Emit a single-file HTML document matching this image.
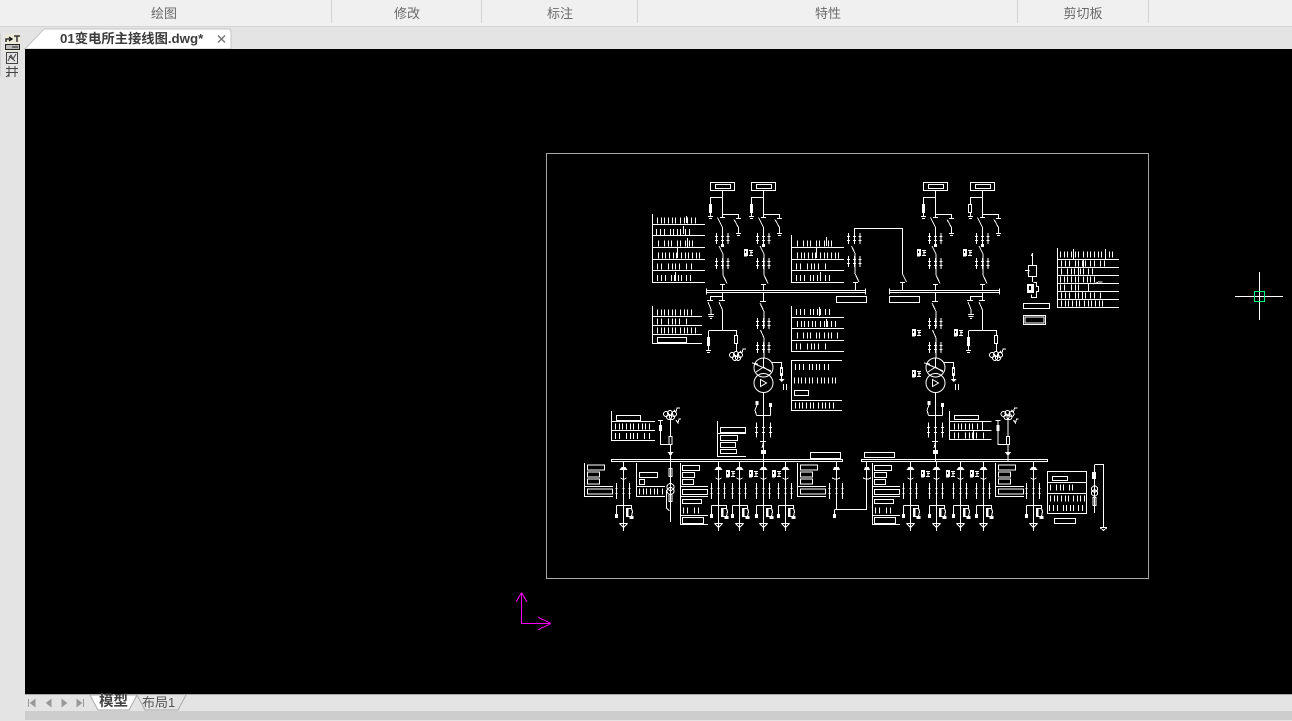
<!DOCTYPE html>
<html lang="zh"><head><meta charset="utf-8"><title>01变电所主接线图.dwg</title>
<style>
html,body{margin:0;padding:0;background:#e4e4e4}
#app{position:relative;width:1292px;height:721px;overflow:hidden;background:#e4e4e4;font-family:"Liberation Sans","Noto Sans CJK SC",sans-serif}
.abs{position:absolute}
#rib{left:0;top:0;width:1292px;height:26px;background:#f0f0f0;border-bottom:1px solid #d4d4d4}
.sep{position:absolute;top:0;width:1px;height:23px;background:#d2d2d2}
.rl{position:absolute;top:5px;font-size:13px;line-height:17px;color:#6a6a6a;transform:translateX(-50%);white-space:nowrap}
#cv{left:25px;top:49px;width:1267px;height:645px;background:#000}
#d{position:absolute;left:0;top:0}
.w{fill:none;stroke:#fff;stroke-width:1}
.f{fill:#fff;stroke:none}
.b{fill:#000;stroke:#fff;stroke-width:1}
.t{fill:none;stroke:#fff;stroke-width:6}
.p1{stroke-dasharray:1 3 1 2 1 3 1 3 1 2 1 4 1 3 1 2 1 3}
.p2{stroke-dasharray:1 3 1 3 1 5 1 2 1 3 1 2 1 4 1 3 1 5}
.p3{stroke-dasharray:1 5 1 3 1 2 1 5 1 2 1 4 1 3 1 2}
.p4{stroke-dasharray:1 3 1 6 1 3 1 2 1 3 1 6 1 4}
</style></head><body><div id="app">
<div class="abs" id="rib">
<span class="sep" style="left:331px"></span><span class="sep" style="left:481px"></span><span class="sep" style="left:637px"></span><span class="sep" style="left:1017px"></span><span class="sep" style="left:1148px"></span>
<span class="rl" style="left:164px">绘图</span><span class="rl" style="left:407px">修改</span><span class="rl" style="left:560px">标注</span><span class="rl" style="left:828px">特性</span><span class="rl" style="left:1083px">剪切板</span>
</div>
<svg class="abs" style="left:0;top:27px" width="240" height="23">
<path d="M25 22L44 2Q45 2 46 2H228Q231 2 231 5V22Z" fill="#fff" stroke="#c4c4c4"/>
<path d="M218 8.5l7 7M225 8.5l-7 7" stroke="#777" stroke-width="1.5" fill="none"/>
</svg>
<div class="abs" style="left:60px;top:30px;font-size:13.3px;font-weight:bold;line-height:17px;color:#3c3c3c;white-space:nowrap">01变电所主接线图.dwg*</div>
<div class="abs" style="left:0;top:33px;width:1px;height:43px;background:#d2d2d2"></div>
<svg class="abs" style="left:4px;top:34px" width="18" height="44">
<rect x="1" y="0" width="15" height="17" fill="#ecebd8"/>
<path d="M2 8V5H7M5 3l3 2-3 2" fill="none" stroke="#111" stroke-width="1.3"/>
<path d="M10 2h6M13 2v6" stroke="#333" stroke-width="1.5" fill="none"/>
<rect x="1.5" y="10.5" width="14" height="5" fill="#bbb" stroke="#222"/>
<path d="M8 13h6" stroke="#222"/>
<rect x="2.5" y="18.5" width="11" height="11" fill="none" stroke="#444"/>
<path d="M4 27l3-6 2 4 3-5M5 22l6 5" stroke="#444" fill="none"/>
<path d="M2 34.5h12M2 38.5h12M5 32v11M11 32v11M2 43c2-1 3-2 3-4" stroke="#444" fill="none"/>
</svg>
<div class="abs" id="cv"></div>
<svg id="d" width="1292" height="721" viewBox="0 0 1292 721" shape-rendering="crispEdges">
<defs>
<path id="tr" class="w" d="M-6 0v11M0 0v11M5.500 0v11M-7.500 3.500h3M-7.500 7.500h3M-1.500 3.500h3M-1.500 7.500h3M4 3.500h3M4 7.500h3"/>
<path id="tr2" class="w" d="M-7 0v16M0 0v16M6 0v16M-8 5.500h2M-8 10.500h2M-1 5.500h2M-1 10.500h2M5 5.500h2M5 10.500h2"/>
<g id="lab"><rect class="f" x="0" y="0" width="4" height="7"/><path class="w" d="M5 1.500h4M6 3.500h3M5 6.500h4M7 1v5M0 7h3"/><rect x="1" y="2" width="1" height="2" fill="#000"/></g>
<g id="blob"><circle class="w" cx="0" cy="0" r="2.500"/><circle class="w" cx="4" cy="-1" r="2.500"/><circle class="w" cx="8" cy="0" r="2.500"/><circle class="w" cx="3" cy="3" r="2.500"/><circle class="w" cx="6" cy="3" r="2.500"/><path class="w" d="M8-4l2 2 1-4h3"/></g>
<g id="bayTop">
<rect class="w" x="710.500" y="182.500" width="24" height="8"/><rect class="w" x="715.500" y="184.500" width="15" height="4"/>
<path class="w" d="M722.500 191V217M722.500 197.500H710.500V204M710.500 213V216M708 216.500h5M709 218.500h3M722.500 214.500H738.500V218M736 218.500h5M734 219.500l4.500 8V233M736 233.500h5M737 235.500h3M720 217.500h5M717.500 217.500l5 10V245M719 246l4 8V275l4 8.500M720 284.500h5M722.500 284.500V290"/>
<rect class="f" x="709" y="204" width="3" height="9"/><rect class="f" x="721" y="244" width="3" height="3"/>
<use href="#tr" x="722.500" y="233"/><use href="#tr" x="722.500" y="258"/>
</g>
<g id="bayLow">
<path class="w" d="M722.500 293V300M719 300.500h6M722.500 296.500H710.500V300M707 300.500h6M708 302l3 7.500V314M708 314.500h6M708.500 316.500h5M710 318.500h2M719 302l3.500 8V330M708.500 330.500H736.500V335M708.500 331V337M708.500 346V350M706 350.500h5M707 352.500h3M736.500 344V352"/>
<rect class="f" x="707" y="337" width="3" height="9"/><rect class="b" x="734.500" y="335.500" width="3" height="8"/>
<use href="#blob" x="732" y="355"/>
</g>
<g id="trans">
<path class="w" d="M763.500 293V302M760 301.500h6M760 303l4 8.500V328M760.500 330l3.500 8V358M752 363l6 1M772 362.500H781.500V367M781.500 376V381M763.500 392.500V461M756.500 415.500H770.500M756.500 415.500L755 410 757 405V401M770.500 415.500V404M760 441.500h6M763.500 442l-1.500 6"/>
<circle class="w" cx="763.500" cy="367.500" r="9.500" shape-rendering="auto"/><circle class="w" cx="763.500" cy="383" r="9.500" shape-rendering="auto"/>
<path class="w" d="M763.500 358V367L756 372M763.500 367L771 372M755 364L771 371" shape-rendering="auto"/>
<path class="w" d="M760.500 379.500V386.500L766.500 383Z" shape-rendering="auto"/>
<rect class="f" x="780" y="367" width="3" height="9"/><rect x="781" y="369" width="1" height="4" fill="#000"/><path class="f" d="M778.500 379h6l-3 3z"/>
<path class="w" d="M783.500 384v6M786.500 384v6"/>
<rect class="f" x="755.500" y="401" width="3" height="4"/><rect class="f" x="769" y="403" width="3" height="4"/>
<use href="#tr" x="763.500" y="318"/><use href="#tr" x="763.500" y="342"/>
<path class="w" d="M756.500 422.500v15M763.500 422.500v15M770.500 422.500v15M755 427.500h3M755 432.500h3M762 427.500h3M762 432.500h3M769 427.500h3M769 432.500h3"/>
<rect class="f" x="761" y="450" width="5" height="4"/>
</g>
<g id="fus">
<path class="w" d="M670.500 418V461M660.500 420V444.500H670.500M658 420.500h5M660.500 431V420"/>
<use href="#blob" x="666" y="414"/>
<path class="w" d="M676 420l2 3 1-4h2"/>
<rect class="f" x="659" y="425" width="3" height="6"/><rect class="b" x="669" y="436.500" width="3" height="8"/>
<path class="f" d="M667.500 452h6l-3 4z"/>
</g>
<g id="fd">
<path class="w" d="M0 462V531M-3 478q3 2 6 0M-4 523.500h8M-4 523.500l4 4 4-4M-7 505.500H8V508M-7 505.500V515"/>
<path class="f" d="M-2 467h4l2 3h-8z"/>
<use href="#tr2" x="0" y="483"/>
<rect class="f" x="-8.500" y="514" width="3" height="4"/>
<path class="w" d="M3 508.500h5l1 3-1 5H3z"/><rect class="f" x="3" y="509" width="2" height="7"/><rect class="f" x="6" y="516" width="4" height="3"/>
</g>
<g id="bx4">
<path class="w" d="M0.500 0V33.500H29M0.500 23.500H29"/>
<rect class="w" x="3.500" y="2" width="17" height="5"/><rect class="w" x="3.500" y="9" width="12" height="5"/><rect class="w" x="3.500" y="16" width="12" height="5"/><rect class="w" x="3.500" y="26" width="25" height="5"/>
</g>
</defs>
<!-- frame -->
<rect x="546.500" y="153.500" width="602" height="425" fill="none" stroke="#a6a6a6"/>
<!-- upper bays -->
<use href="#bayTop"/><use href="#bayTop" x="41"/><use href="#bayTop" x="213"/><use href="#bayTop" x="260"/>
<rect class="b" x="968.500" y="204.500" width="3" height="8"/>
<use href="#lab" x="744" y="249"/><use href="#lab" x="917" y="249"/><use href="#lab" x="963" y="249"/>
<!-- tie -->
<path class="w" d="M854.500 244V228.500H902.500V274l4 8M900 282.500h5M902.500 282.500V290M851.500 246l3.500 7.500V273.500l4 8.500M853 282.500h5M855.500 282.500V290"/>
<use href="#tr" x="854.500" y="233"/><use href="#tr" x="854.500" y="256"/>
<!-- HV bus -->
<path class="w" d="M706 290.500H866M706 292.500H866M706.500 288.500v6M865.500 288.500v6M889 290.500H999.500M889 292.500H999.500M889.500 288.500v6M999.500 288.500v6"/>
<rect class="w" x="836.500" y="296.500" width="30" height="6"/><rect class="w" x="889.500" y="296.500" width="30" height="6"/>
<use href="#bayLow"/><use href="#bayLow" x="260"/><use href="#trans"/><use href="#trans" x="172"/>
<use href="#lab" x="912" y="329"/><use href="#lab" x="954" y="329"/><use href="#lab" x="912" y="370"/>
<!-- table T1 -->
<path class="w" d="M652.500 214V282.500H705M652.500 224.500H705M652.500 235.500H705M652.500 247.500H705M652.500 259.500H705M652.500 270.500H705"/>
<path class="t p1" d="M657 220.500H697"/><path class="t p2" d="M656 232H694"/><path class="t p3" d="M658 243.500H698"/><path class="t p1" d="M658 255.500H700"/><path class="t p4" d="M657 266.500H692"/><path class="t p2" d="M657 278H692"/>
<path class="w" d="M686.500 216v7M683.500 226v8M687.500 238v9M677.500 248v10M675.500 272v9"/>
<!-- T2 -->
<path class="w" d="M791.500 235V282.500H844M791.500 247.500H844M791.500 259.500H844M791.500 270.500H844"/>
<path class="t p3" d="M797 243.500H836"/><path class="t p1" d="M797 255.500H839"/><path class="t p4" d="M796 266.500H830"/><path class="t p2" d="M796 278H831"/>
<path class="w" d="M826.500 237v9M816.500 248v10M820.500 272v9"/>
<!-- T3 -->
<path class="w" d="M652.500 306V343.500H702M652.500 316.500H702M652.500 325.500H702M652.500 334.500H702"/>
<path class="t p1" d="M657 312.500H694"/><path class="t p4" d="M657 321.500H688"/><path class="t p1" d="M657 330.500H696"/>
<rect class="w" x="657.500" y="337.500" width="29" height="5"/>
<!-- T4 -->
<path class="w" d="M791.500 306V351.500H844M791.500 317.500H844M791.500 328.500H844M791.500 340.500H844"/>
<path class="t p2" d="M796 312H830"/><path class="t p1" d="M797 324H836"/><path class="t p3" d="M797 335.500H839"/><path class="t p4" d="M796 346.500H830"/>
<path class="w" d="M819.500 307v9M826.500 319v8"/>
<!-- T5 -->
<path class="w" d="M791.500 360V410.500H842M791.500 360.500H842M791.500 400.500H842"/>
<path class="t p2" d="M795 367H829"/><path class="t p1" d="M794 380.500H839"/><rect class="w" x="794.500" y="390.500" width="14" height="5"/><path class="t p1" d="M795 405.500H834"/>
<!-- T6 -->
<path class="w" d="M717.500 421V456.500H746M717.500 433.500H746"/>
<rect class="w" x="720.500" y="427.500" width="25" height="5"/><rect class="w" x="720.500" y="435.500" width="17" height="5"/><rect class="w" x="720.500" y="442.500" width="15" height="5"/><rect class="w" x="720.500" y="449.500" width="16" height="4"/>
<!-- T7 T8 -->
<path class="w" d="M611.500 411V440.500H655M611.500 421.500H655M611.500 430.500H655"/>
<rect class="w" x="616.500" y="415.500" width="24" height="5"/><path class="t p1" d="M615 426.500H653"/><path class="t p4" d="M615 436H650"/>
<path class="w" d="M949.500 411V439.500H991.500M949.500 421.500H991.500M949.500 430.500H991.500M982.500 421v9M973.500 431v8"/>
<rect class="w" x="954.500" y="415.500" width="24" height="4"/><path class="t p1" d="M954 426.500H980"/><path class="t p4" d="M954 435.500H985"/>
<!-- T9 -->
<path class="w" d="M1057.500 248V307.500H1119M1057.500 259.500H1119M1057.500 267.500H1119M1057.500 275.500H1119M1057.500 283.500H1119M1057.500 291.500H1119M1057.500 299.500H1119"/>
<path class="t p1" d="M1060 254.500H1115"/><path class="t p2" d="M1061 263.500H1107"/><path class="t p3" d="M1061 271.500H1094"/><path class="t p1" d="M1060 279.500H1096"/><path class="t p4" d="M1060 287.500H1082"/><path class="t p2" d="M1061 295.500H1103"/><path class="t p1" d="M1061 303.500H1106"/>
<path class="w" d="M1073.500 249v10M1105.500 249v10M1083.500 260v7M1078.500 268v7M1088.500 284v7M1082.500 292v8M1093.500 284l5-2h4"/>
<path class="w" d="M1032.500 256V265M1028.500 265.500h8v11h-8zM1025 270.500h4l-1 3M1032.500 277V282M1033.500 282.500h3v4h2v5h-2v6h-5v-3"/>
<rect class="f" x="1027" y="284" width="7" height="9"/><rect x="1029" y="286" width="2" height="4" fill="#000"/><path class="f" d="M1031 256h2v-3h-1z"/>
<rect class="w" x="1023.500" y="303.500" width="26" height="5"/>
<rect class="w" x="1023.500" y="315.500" width="22" height="9"/><rect class="w" x="1025" y="317" width="19" height="6"/>
<!-- LV bus -->
<rect class="w" x="611.500" y="459.500" width="231" height="2"/><rect class="w" x="861.500" y="459.500" width="186" height="2"/>
<rect class="w" x="810.500" y="452.500" width="30" height="6"/><rect class="w" x="864.500" y="452.500" width="30" height="5"/>
<use href="#fus"/><use href="#fus" x="337.500"/>
<!-- LV side tables -->
<use href="#bx4" x="584" y="463"/><use href="#bx4" x="797" y="463"/><use href="#bx4" x="995" y="463"/>
<path class="w" d="M636.500 463V496.500H665M636.500 486.500H665"/><rect class="w" x="639.500" y="472.500" width="18" height="5"/><rect class="w" x="639.500" y="479.500" width="5" height="5"/><path class="t p1" d="M639 491.500H664"/>
<g id="b3"><path class="w" d="M680.500 463V524.500H708M680.500 486.500H708M680.500 496.500H708M680.500 515.500H708"/>
<rect class="w" x="682.500" y="465.500" width="17" height="5"/><rect class="w" x="682.500" y="472.500" width="12" height="5"/><rect class="w" x="682.500" y="479.500" width="11" height="5"/><rect class="w" x="682.500" y="489.500" width="25" height="5"/><rect class="w" x="682.500" y="499.500" width="19" height="4"/><rect class="w" x="682.500" y="517.500" width="21" height="6"/><path class="t p4" d="M683 510.500H700"/></g>
<use href="#b3" x="192"/>
<!-- LV feeders -->
<use href="#fd" x="623.500"/><use href="#fd" x="718.500"/><use href="#fd" x="739.500"/><use href="#fd" x="763.500"/><use href="#fd" x="785.500"/>
<use href="#fd" x="910.500"/><use href="#fd" x="936.500"/><use href="#fd" x="960.500"/><use href="#fd" x="983.500"/><use href="#fd" x="1033.500"/>
<use href="#lab" x="726" y="470"/><use href="#lab" x="749" y="470"/><use href="#lab" x="772" y="470"/>
<use href="#lab" x="921" y="470"/><use href="#lab" x="946" y="470"/><use href="#lab" x="970" y="470"/>
<!-- centre feeders -->
<path class="w" d="M670.500 461V522M666.500 490V508l3 3M836.500 461V509.500M834.500 509.500H866.500V462M834.500 510V515"/>
<rect class="w" x="669" y="468.500" width="3" height="8"/><circle class="w" cx="670.500" cy="487" r="3.500"/><circle class="w" cx="670.500" cy="491" r="3.500"/><rect class="w" x="669" y="494.500" width="3" height="7"/>
<path class="f" d="M834 467h5l1 3h-7zM865 467h4l1 3h-6z"/><path class="w" d="M832 478q4 2 8 0M863 478q4 2 8 0"/>
<rect class="f" x="833" y="514" width="3" height="4"/>
<use href="#tr2" x="836.500" y="483"/>
<!-- C3 -->
<rect class="w" x="1047.500" y="471.500" width="39" height="42"/><path class="w" d="M1047.500 482.500h39M1047.500 493.500h39"/>
<rect class="w" x="1052.500" y="476.500" width="15" height="4"/><path class="t p3" d="M1050 487.500H1074"/><path class="t p1" d="M1050 498.500H1085"/><path class="t p2" d="M1049 508H1085"/>
<rect class="w" x="1054.500" y="518.500" width="21" height="5"/>
<path class="w" d="M1094.500 464.500H1103.500V527M1100 527.500h7M1100 527.500l3.500 3 3.500-3M1094.500 465V513"/>
<rect class="f" x="1092" y="472" width="4" height="7"/><circle class="w" cx="1094.500" cy="489" r="3"/><circle class="w" cx="1094.500" cy="493" r="3"/><rect class="w" x="1093" y="497.500" width="3" height="8"/>
<!-- crosshair -->
<path d="M1235 296.500H1283M1259.500 272V320" stroke="#fff" fill="none"/>
<rect x="1254.500" y="291.500" width="10" height="10" fill="none" stroke="#00ff7f"/>
<!-- UCS -->
<path d="M521.500 593V623.500H551M518 598l3.500-5 3.500 5M516 602l3-5M527 602l-3-5M551 623.500l-8-4M551 623.500l-8 4M543 620l-5-3M543 627l-5 3" fill="none" stroke="#f0f" stroke-width="1"/>
</svg>
<!-- bottom -->
<div class="abs" style="left:25px;top:694px;width:1267px;height:1px;background:#a8a8a8"></div>
<div class="abs" style="left:25px;top:711px;width:1267px;height:9px;background:#cdcdcd"></div>
<svg class="abs" style="left:25px;top:695px" width="170" height="17">
<path d="M65 0L73 15H104L112 0Z" fill="#fff" stroke="#aaa"/>
<path d="M112 0L120 15H153L161 0" fill="none" stroke="#aaa"/>
<path d="M3.500 4v8M10 4.500L5.500 8 10 11.500ZM26 4.500L21.500 8 26 11.500ZM37 4.500L41.500 8 37 11.500ZM52 4.500L56.500 8 52 11.500ZM58.500 4v8" fill="#999" stroke="#999"/>
</svg>
<div class="abs" style="left:99px;top:694px;font-size:14.500px;font-weight:bold;line-height:17px;color:#444;white-space:nowrap">模型</div>
<div class="abs" style="left:142px;top:694px;font-size:13px;line-height:17px;color:#555;white-space:nowrap">布局1</div>
</div></body></html>
